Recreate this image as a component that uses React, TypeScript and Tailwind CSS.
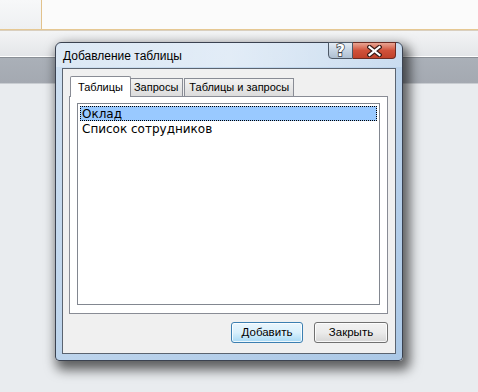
import React from "react";

const ui = "font-['Liberation_Sans',Arial,sans-serif]";

function Tab({ label, active }: { label: string; active?: boolean }) {
  if (active) {
    return (
      <div className="relative z-10 -mr-[2px] -mb-px flex h-[21px] items-center rounded-t-[2px] border border-b-0 border-[#898c95] bg-white px-[7px] text-[11px] text-black">
        {label}
      </div>
    );
  }
  return (
    <div className="mt-[2px] flex h-[18px] items-center border border-b-0 border-[#898c95] bg-gradient-to-b from-[#f3f3f3] to-[#dcdcdc] px-[4px] text-[11px] text-black">
      {label}
    </div>
  );
}

function Button({ label, primary }: { label: string; primary?: boolean }) {
  return (
    <button
      className={
        primary
          ? "flex h-[21px] w-[72px] items-center justify-center rounded-[3px] border border-[#3c7fb1] bg-gradient-to-b from-[#eaf6fd] via-[#d9f0fc] to-[#a7d9f5] text-[11.5px] text-black shadow-[inset_0_0_0_1px_rgba(255,255,255,0.8)]"
          : "flex h-[21px] w-[74px] items-center justify-center rounded-[3px] border border-[#707070] bg-gradient-to-b from-[#f2f2f2] via-[#ebebeb] to-[#d6d6d6] text-[11.5px] text-black shadow-[inset_0_0_0_1px_rgba(255,255,255,0.8)]"
      }
    >
      {label}
    </button>
  );
}

export default function App() {
  const rows = ["Оклад", "Список сотрудников"];

  return (
    <div className={`relative h-[392px] w-[478px] overflow-hidden bg-[#e9ecef] ${ui}`}>
      {/* background application window */}
      <div className="flex h-[29px]">
        <div className="w-[41px] bg-gradient-to-b from-[#f7f8f9] to-[#eef0f2]" />
        <div className="w-px bg-[#e2c28c]" />
        <div className="flex-1 bg-[#fbfbfb]" />
      </div>
      <div className="h-px bg-[#e6c893]" />
      <div className="h-px bg-[#d9cfbf]" />
      <div className="h-[25px] bg-gradient-to-b from-[#f3f4f5] to-[#e4e6e9]" />
      <div className="h-px bg-white" />
      <div className="h-px bg-[#8a8f96]" />
      <div className="h-[25px] bg-gradient-to-b from-[#aab0b8] to-[#a4a9b1]" />
      <div className="h-px bg-[#c9cdd2]" />

      {/* dialog window */}
      <div className="absolute left-[55px] top-[42px] flex h-[319px] w-[348px] flex-col rounded-t-[6px] rounded-b-[4px] border border-[#3b4250] bg-gradient-to-br from-[#cfe0f1] via-[#bdd4ec] to-[#abc8e6] px-[6px] pb-[6px] shadow-[4px_6px_12px_3px_rgba(0,0,0,0.6)]">
        <div className="pointer-events-none absolute inset-x-0 top-0 h-[24px] rounded-t-[6px] bg-gradient-to-r from-white/30 via-white/50 to-white/20" />
        <div className="relative flex h-[25px] items-center pl-[1px] text-[12px] text-black">
          Добавление таблицы
        </div>

        {/* caption buttons */}
        <div className="absolute right-[6px] top-[-1px] flex h-[17px]">
          <div className="flex w-[25px] items-center justify-center rounded-bl-[4px] border border-[#4d5866] bg-gradient-to-b from-[#e4ebf3] via-[#c6d4e3] to-[#aebfd1] pt-px text-[15px] font-bold leading-none text-white [-webkit-text-stroke:1.5px_#3a3f46] [paint-order:stroke_fill] font-['DejaVu_Sans',sans-serif]">
            ?
          </div>
          <div className="flex w-[43px] items-center justify-center rounded-br-[4px] border border-l-0 border-[#6b2a22] bg-gradient-to-b from-[#e8a493] via-[#d0513a] to-[#c0412a]">
            <svg width="15" height="12" viewBox="0 0 15 12">
              <path d="M2.5 2 L12.5 10 M12.5 2 L2.5 10" stroke="#3b1b17" strokeWidth="4.5" strokeLinecap="square" />
              <path d="M2.5 2 L12.5 10 M12.5 2 L2.5 10" stroke="#ffffff" strokeWidth="2.2" strokeLinecap="square" />
            </svg>
          </div>
        </div>

        {/* client area */}
        <div className="relative flex flex-1 flex-col border border-[#5b6470] bg-[#f0f0f0] px-[6px]">
          <div className="mt-[6px] flex h-[21px] items-end pl-[1px]">
            <Tab label="Таблицы" active />
            <Tab label="Запросы" />
            <div className="ml-px">
              <Tab label="Таблицы и запросы" />
            </div>
          </div>
          <div className="mr-[1px] flex h-[218px] flex-col border border-[#898c95] bg-white px-[7px] pt-[6px] pb-[8px]">
            <div className="flex-1 border border-[#828790] bg-white p-[2px] text-[12px] text-black font-['DejaVu_Sans',sans-serif]">
              {rows.map((r, i) => (
                <div
                  key={r}
                  className={
                    i === 0
                      ? "flex h-[15px] items-center border border-dotted border-black bg-[#99c9ff] pl-px leading-none"
                      : "flex h-[15px] items-center pl-[2px] leading-none"
                  }
                >
                  {r}
                </div>
              ))}
            </div>
          </div>
          <div className="mt-[8px] flex justify-end gap-[11px] pr-px">
            <Button label="Добавить" primary />
            <Button label="Закрыть" />
          </div>
        </div>
      </div>
    </div>
  );
}
